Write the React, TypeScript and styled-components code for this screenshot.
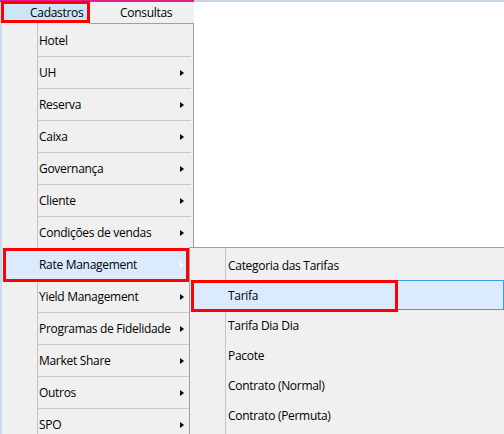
import React from "react";
import styled, { createGlobalStyle } from "styled-components";

const GlobalStyle = createGlobalStyle`
    html, body {
        margin: 0;
        padding: 0;
        background: #ffffff;
        overflow: hidden;
    }
    body {
        font-family: "Open Sans", "Noto Sans", sans-serif;
        font-size: 12px;
        letter-spacing: -0.3px;
        color: #000000;
    }
`

const Screen = styled.div`
    position: relative;
    width: 504px;
    height: 434px;
    overflow: hidden;
    background: #ffffff;
`

const TopRow = styled.div`
    display: flex;
    height: 23px;
`

const MenuBar = styled.div`
    display: flex;
    width: 194px;
    border-top: 2px solid #e21d8c;
    background: #f0f0f0;
`

const MenuBarItem = styled.div<{ $active?: boolean; $width?: number }>`
    display: flex;
    align-items: center;
    width: ${p => (p.$width ? `${p.$width}px` : "auto")};
    flex: ${p => (p.$width ? "none" : "1")};
    padding-left: ${p => (p.$active ? 30 : 31)}px;
    background: ${p => (p.$active ? "#cce6f8" : "transparent")};
    box-sizing: border-box;
`

const Filler = styled.div`
    flex: 1;
    border-top: 2px solid #c9d3e1;
`

const BodyRow = styled.div`
    display: flex;
    height: 411px;
`

const LeftStrip = styled.div`
    width: 2px;
    background: #c9daea;
`

const Dropdown = styled.div`
    position: relative;
    width: 192px;
    box-sizing: border-box;
    padding-top: 2px;
    border-right: 1px solid #a0a0a0;
    background:
        linear-gradient(to right, transparent 35px, #c5c5c5 35px, #c5c5c5 36px, transparent 36px),
        #f0f0f0;
    &::before {
        content: "";
        position: absolute;
        top: 0;
        left: 87px;
        right: 0;
        height: 1px;
        background: #a0a0a0;
    }
`

const Item = styled.div<{ $active?: boolean }>`
    display: flex;
    align-items: center;
    justify-content: space-between;
    height: 31px;
    margin: 0 2px 0 1px;
    padding: 0 6px 0 36px;
    box-sizing: border-box;
    background: ${p => (p.$active ? "#dbeafc" : "transparent")};
    border: 1px solid ${p => (p.$active ? "#3a9fdc" : "transparent")};
    border-left: none;
`

const Separator = styled.div`
    height: 1px;
    margin: 0 2px 0 36px;
    background: #c8c8c8;
`

const Arrow = styled.span<{ $light?: boolean }>`
    width: 0;
    height: 0;
    border-top: 3.5px solid transparent;
    border-bottom: 3.5px solid transparent;
    border-left: 4px solid ${p => (p.$light ? "#ffffff" : "#000000")};
`

const SubMenu = styled.div`
    position: absolute;
    left: 187px;
    top: 224px;
    width: 330px;
    height: 240px;
    padding: 2px;
    border-top: 1px solid #a0a0a0;
    border-left: 1px solid #a0a0a0;
    background:
        linear-gradient(to right, transparent 35px, #c5c5c5 35px, #c5c5c5 36px, transparent 36px),
        #f0f0f0;
`

const SubItem = styled.div<{ $active?: boolean }>`
    display: flex;
    align-items: center;
    height: 30px;
    width: 312px;
    padding-left: 35px;
    box-sizing: border-box;
    background: ${p => (p.$active ? "#dbeafc" : "transparent")};
    border: 1px solid ${p => (p.$active ? "#3a9fdc" : "transparent")};
`

const Mark = styled.div<{ $x: number; $y: number; $w: number; $h: number }>`
    position: absolute;
    left: ${p => p.$x}px;
    top: ${p => p.$y}px;
    width: ${p => p.$w}px;
    height: ${p => p.$h}px;
    border: 3px solid #ff0000;
    box-sizing: border-box;
    pointer-events: none;
`

const menuItems = [
    { label: "Hotel", sub: false },
    { label: "UH", sub: true },
    { label: "Reserva", sub: true },
    { label: "Caixa", sub: true },
    { label: "Governança", sub: true },
    { label: "Cliente", sub: true },
    { label: "Condições de vendas", sub: true },
    { label: "Rate Management", sub: true, active: true },
    { label: "Yield Management", sub: true },
    { label: "Programas de Fidelidade", sub: true },
    { label: "Market Share", sub: true },
    { label: "Outros", sub: true },
    { label: "SPO", sub: true },
]

const subItems = [
    "Categoria das Tarifas",
    "Tarifa",
    "Tarifa Dia Dia",
    "Pacote",
    "Contrato (Normal)",
    "Contrato (Permuta)",
]

export default function App() {
    return (
        <>
            <GlobalStyle />
            <Screen>
                <TopRow>
                    <MenuBar>
                        <MenuBarItem $active $width={89}>Cadastros</MenuBarItem>
                        <MenuBarItem>Consultas</MenuBarItem>
                    </MenuBar>
                    <Filler />
                </TopRow>
                <BodyRow>
                    <LeftStrip />
                    <Dropdown>
                        {menuItems.map((item, i) => (
                            <React.Fragment key={item.label}>
                                <Item $active={item.active}>
                                    <span>{item.label}</span>
                                    {item.sub && <Arrow $light={item.active} />}
                                </Item>
                                {i < menuItems.length - 1 && <Separator />}
                            </React.Fragment>
                        ))}
                        <SubMenu>
                            {subItems.map(label => (
                                <SubItem key={label} $active={label === "Tarifa"}>{label}</SubItem>
                            ))}
                        </SubMenu>
                    </Dropdown>
                </BodyRow>

                <Mark $x={1} $y={1} $w={89} $h={22} />
                <Mark $x={3} $y={248} $w={186} $h={34} />
                <Mark $x={191} $y={280} $w={207} $h={32} />
            </Screen>
        </>
    )
}
